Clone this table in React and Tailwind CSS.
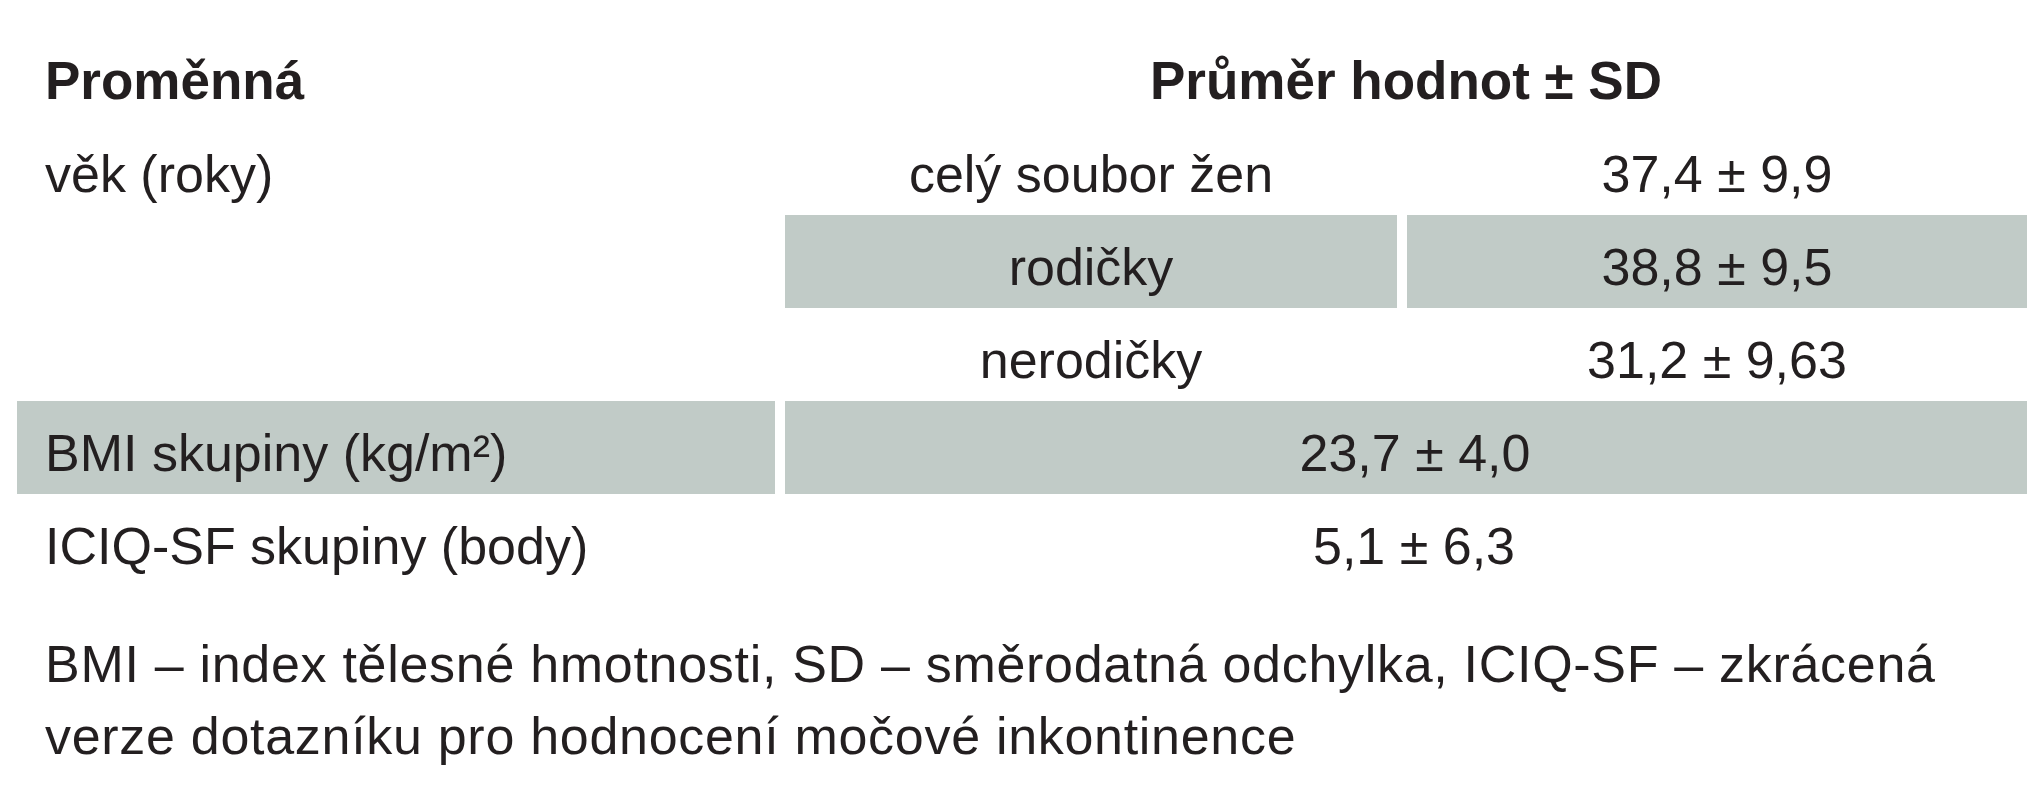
const cell = 'h-[93px] pt-[11px] leading-[82px] whitespace-nowrap';
const gray = 'bg-[#c1cbc7]';

function Row({ label, labelGray, children }) {
  return (
    <>
      <div className={`${cell} pl-[28px] ${labelGray ? gray : ''}`}>{label}</div>
      {children}
    </>
  );
}

export default function App() {
  return (
    <div className="min-h-screen w-[2031px] bg-white pt-[29px] font-['Liberation_Sans',Arial,sans-serif] text-[52px] text-[#231f20]">
      <div className="ml-[17px] grid grid-cols-[758px_612px_620px] gap-x-[10px]">
        <div className={`${cell} pl-[28px] text-[53px] font-bold`}>Proměnná</div>
        <div className={`${cell} col-span-2 text-center text-[53px] font-bold`}>Průměr hodnot ± SD</div>

        <Row label="věk (roky)">
          <div className={`${cell} text-center`}>celý soubor žen</div>
          <div className={`${cell} text-center`}>37,4 ± 9,9</div>
        </Row>

        <Row label="">
          <div className={`${cell} ${gray} text-center`}>rodičky</div>
          <div className={`${cell} ${gray} text-center`}>38,8 ± 9,5</div>
        </Row>

        <Row label="">
          <div className={`${cell} text-center`}>nerodičky</div>
          <div className={`${cell} text-center`}>31,2 ± 9,63</div>
        </Row>

        <Row label="BMI skupiny (kg/m²)" labelGray>
          <div className={`${cell} ${gray} col-span-2 pl-[18px] text-center`}>23,7 ± 4,0</div>
        </Row>

        <Row label="ICIQ-SF skupiny (body)">
          <div className={`${cell} col-span-2 pl-[16px] text-center`}>5,1 ± 6,3</div>
        </Row>
      </div>

      <p className="mt-[41px] pl-[45px] leading-[72px] tracking-[0.7px]">
        BMI – index tělesné hmotnosti, SD – směrodatná odchylka, ICIQ-SF – zkrácená
        <br />
        verze dotazníku pro hodnocení močové inkontinence
      </p>
    </div>
  );
}
